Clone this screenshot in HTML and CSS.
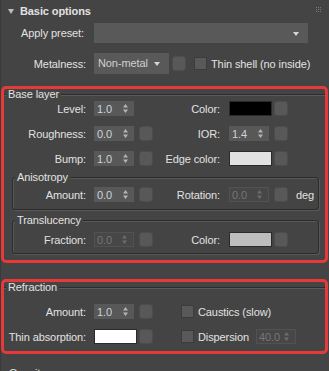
FILE: index.html
```html
<!DOCTYPE html>
<html lang="en">
<head>
<meta charset="UTF-8" />
<meta name="viewport" content="width=device-width, initial-scale=1.0"/>
<title>Basic options</title>
<link rel="stylesheet" href="styles.css">
</head>
<body>

<div class="rollout">
  <div class="rollout-head">
    <span class="caret"></span>
    <span class="title">Basic options</span>
    <svg class="grip" width="5" height="5" viewBox="0 0 5 5"><path d="M0 0h1v1H0zM2 0h1v1H2zM4 0h1v1H4zM0 2h1v1H0zM2 2h1v1H2zM4 2h1v1H4zM0 4h1v1H0zM2 4h1v1H2zM4 4h1v1H4z"/></svg>
  </div>

  <div class="line preset">
    <label class="lab">Apply preset:</label>
    <div class="dropdown wide"><span></span><i class="arrow"></i></div>
  </div>

  <div class="line metal">
    <label class="lab">Metalness:</label>
    <div class="dropdown"><span>Non-metal</span><i class="arrow"></i></div>
    <span class="map"></span>
    <span class="check"></span>
    <span class="check-text">Thin shell (no inside)</span>
  </div>

  <div class="marked">
    <fieldset class="group main">
      <legend>Base layer</legend>

      <div class="prop">
        <label class="lab">Level:</label>
        <div class="spin"><span>1.0</span><svg class="arr" viewBox="0 0 5 9"><path d="M2.5 0 5 3.5H0zM0 5.5h5L2.5 9z"/></svg></div>
        <span></span>
        <label class="rlab">Color:</label>
        <span class="swatch black"></span>
        <span class="map"></span>
      </div>

      <div class="prop">
        <label class="lab">Roughness:</label>
        <div class="spin"><span>0.0</span><svg class="arr" viewBox="0 0 5 9"><path d="M2.5 0 5 3.5H0zM0 5.5h5L2.5 9z"/></svg></div>
        <span class="map"></span>
        <label class="rlab">IOR:</label>
        <div class="spin"><span>1.4</span><svg class="arr" viewBox="0 0 5 9"><path d="M2.5 0 5 3.5H0zM0 5.5h5L2.5 9z"/></svg></div>
        <span class="map"></span>
      </div>

      <div class="prop">
        <label class="lab">Bump:</label>
        <div class="spin"><span>1.0</span><svg class="arr" viewBox="0 0 5 9"><path d="M2.5 0 5 3.5H0zM0 5.5h5L2.5 9z"/></svg></div>
        <span class="map"></span>
        <label class="rlab">Edge color:</label>
        <span class="swatch edge"></span>
        <span class="map"></span>
      </div>

      <fieldset class="group sub">
        <legend>Anisotropy</legend>
        <div class="prop">
          <label class="lab">Amount:</label>
          <div class="spin"><span>0.0</span><svg class="arr" viewBox="0 0 5 9"><path d="M2.5 0 5 3.5H0zM0 5.5h5L2.5 9z"/></svg></div>
          <span class="map"></span>
          <label class="rlab">Rotation:</label>
          <div class="spin off"><span>0.0</span><svg class="arr" viewBox="0 0 5 9"><path d="M2.5 0 5 3.5H0zM0 5.5h5L2.5 9z"/></svg></div>
          <span class="map"></span>
          <span class="unit">deg</span>
        </div>
      </fieldset>

      <fieldset class="group sub">
        <legend>Translucency</legend>
        <div class="prop">
          <label class="lab">Fraction:</label>
          <div class="spin off"><span>0.0</span><svg class="arr" viewBox="0 0 5 9"><path d="M2.5 0 5 3.5H0zM0 5.5h5L2.5 9z"/></svg></div>
          <span class="map"></span>
          <label class="rlab">Color:</label>
          <span class="swatch grey"></span>
          <span class="map"></span>
        </div>
      </fieldset>
    </fieldset>
  </div>

  <div class="marked">
    <fieldset class="group main refr">
      <legend>Refraction</legend>

      <div class="prop">
        <label class="lab">Amount:</label>
        <div class="spin"><span>1.0</span><svg class="arr" viewBox="0 0 5 9"><path d="M2.5 0 5 3.5H0zM0 5.5h5L2.5 9z"/></svg></div>
        <span class="map"></span>
        <div class="opt">
          <span class="check"></span>
          <span class="check-text">Caustics (slow)</span>
        </div>
      </div>

      <div class="prop">
        <label class="lab">Thin absorption:</label>
        <span class="swatch white"></span>
        <span class="map"></span>
        <div class="opt">
          <span class="check"></span>
          <span class="check-text">Dispersion</span>
          <div class="spin off"><span>40.0</span><svg class="arr" viewBox="0 0 5 9"><path d="M2.5 0 5 3.5H0zM0 5.5h5L2.5 9z"/></svg></div>
        </div>
      </div>
    </fieldset>
  </div>

  <div class="next-rollout">Opacity</div>
</div>

</body>
</html>
```

FILE: styles.css
```css
body {
  margin: 0;
  background-color: #444444;
  font-family: "Liberation Sans", Arial, sans-serif;
  font-size: 11px;
  letter-spacing: -0.1px;
  color: #e2e2e2;
  white-space: nowrap;
}
.rollout {
  width: 327px;
  height: 371px;
  overflow: hidden;
  border-left: 1px solid #3a3a3a;
}
.rollout-head {
  display: flex;
  align-items: center;
  height: 22px;
}
.caret {
  width: 0;
  height: 0;
  margin-left: 7px;
  border-top: 5px solid #bdbdbd;
  border-left: 3px solid transparent;
  border-right: 3px solid transparent;
}
.title {
  margin-left: 6px;
  font-weight: bold;
}
.grip {
  margin-left: auto;
  margin-right: 7px;
  align-self: flex-start;
  margin-top: 7px;
  fill: #777;
}

.line {
  display: flex;
  align-items: center;
}
.line .lab {
  width: 93px;
  box-sizing: border-box;
  text-align: right;
  padding-right: 8px;
}
.preset {
  margin-top: 1px;
}
.preset .lab {
  padding-right: 10px;
}
.metal {
  margin-top: 10px;
}
.dropdown {
  position: relative;
  width: 75px;
  height: 21px;
  box-sizing: border-box;
  padding-left: 4px;
  line-height: 21px;
  background-color: #595959;
  color: #d0d0d0;
}
.dropdown.wide {
  width: 214px;
  height: 20px;
}
.arrow {
  position: absolute;
  right: 9px;
  top: 9px;
  border-top: 4px solid #d6d6d6;
  border-left: 3px solid transparent;
  border-right: 3px solid transparent;
}
.metal .map {
  margin-left: 3px;
}
.metal .check {
  margin-left: 8px;
}
.check {
  width: 13px;
  height: 13px;
  box-sizing: border-box;
  background-color: #595959;
  border: 1px solid #3c3c3c;
}
.check-text {
  margin-left: 4px;
}

.map {
  width: 14px;
  height: 15px;
  box-sizing: border-box;
  border-radius: 3px;
  background-color: #585858;
  border: 1px solid #4c4c4c;
}

.marked {
  border: 3px solid #e63a3a;
  border-radius: 5px;
  margin-top: 12px;
}
.marked + .marked {
  margin-top: 16px;
}
.group {
  margin: 0;
  padding: 0;
  min-width: 0;
}
.group legend {
  line-height: 11px;
  padding: 0 2px;
  margin-left: 2px;
  background-color: #444444;
}
.group.main {
  border: none;
  border-top: 1px solid #2c2c2c;
  box-shadow: inset 0 1px 0 #5a5a5a;
  padding-bottom: 6px;
  --lab: 90px;
}
.group.sub {
  border: 1px solid #2c2c2c;
  border-radius: 3px;
  box-shadow: inset 1px 1px 0 #585858, 1px 1px 0 #585858;
  margin: 5px 6px 0 8px;
  padding: 3px 0 6px;
  --lab: 81px;
}
.group.sub + .group.sub {
  padding-top: 5px;
  padding-bottom: 5px;
}

.prop {
  display: grid;
  grid-template-columns: var(--lab) 45px 13px 77px 45px 13px auto;
  align-items: center;
  height: 17px;
}
.prop + .prop {
  margin-top: 8px;
}
.refr .prop {
  grid-template-columns: var(--lab) 45px 13px auto;
}
.refr {
  padding-top: 5px;
}
.refr legend {
  margin-bottom: 5px;
}
.prop .lab {
  text-align: right;
  padding-right: 8px;
}
.prop .rlab {
  text-align: right;
  padding-right: 9px;
}
.unit {
  margin-left: 9px;
}

.spin {
  display: flex;
  align-items: center;
  width: 40px;
  height: 15px;
  box-sizing: border-box;
  padding: 0 6px 0 3px;
  background-color: #585858;
  color: #ccd3da;
}
.spin span {
  flex: 1;
}
.arr {
  width: 5px;
  height: 9px;
  fill: #b4b4b4;
}
.spin.off {
  background-color: #474747;
  border: 1px solid #525252;
  padding-left: 2px;
  color: #767676;
}
.spin.off .arr {
  fill: #6c6c6c;
}

.swatch {
  width: 43px;
  height: 15px;
  box-sizing: border-box;
  border: 1px solid #2a2a2a;
}
.swatch.black { background-color: #000; }
.swatch.edge { background-color: #e1e1e1; }
.swatch.grey { background-color: #bdbdbd; }
.swatch.white { background-color: #fff; }

.opt {
  display: flex;
  align-items: center;
  padding-left: 29px;
}
.opt .spin {
  margin-left: 7px;
}

.next-rollout {
  margin-top: 13px;
  padding-left: 8px;
  line-height: 13px;
}
```
